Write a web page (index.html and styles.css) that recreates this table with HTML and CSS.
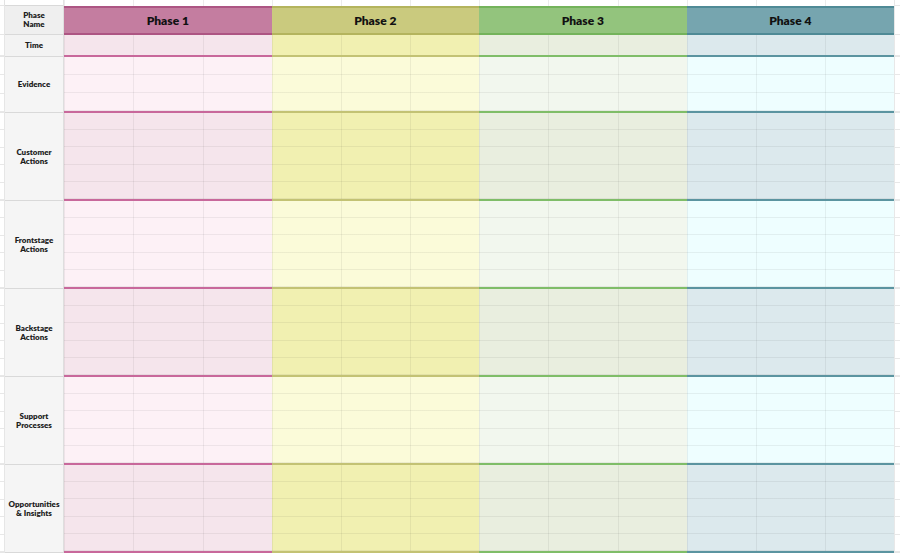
FILE: index.html
```html
<!DOCTYPE html>
<html lang="en">
<head>
<meta charset="utf-8">
<title>Customer Journey Map</title>
<link rel="stylesheet" href="styles.css">
</head>
<body>
<div class="sheet">
  <div class="row top">
    <div class="gut"></div><div class="lab"></div>
    <div class="blank"></div><div class="blank"></div><div class="blank"></div><div class="blank"></div>
    <div class="gut end"></div>
  </div>
  <div class="row head">
    <div class="gut"></div>
    <div class="lab">Phase<br>Name</div>
    <div class="ph p1">Phase 1</div>
    <div class="ph p2">Phase 2</div>
    <div class="ph p3">Phase 3</div>
    <div class="ph p4">Phase 4</div>
    <div class="gut end"></div>
  </div>
  <div class="row sec time dark" style="--n:1">
    <div class="gut"></div>
    <div class="lab">Time</div>
    <div class="cells p1"></div><div class="cells p2"></div><div class="cells p3"></div><div class="cells p4"></div>
    <div class="gut end"></div>
  </div>
  <div class="row sec ev light" style="--n:3">
    <div class="gut"></div>
    <div class="lab">Evidence</div>
    <div class="cells p1"></div><div class="cells p2"></div><div class="cells p3"></div><div class="cells p4"></div>
    <div class="gut end"></div>
  </div>
  <div class="row sec big dark" style="--n:5">
    <div class="gut"></div>
    <div class="lab">Customer<br>Actions</div>
    <div class="cells p1"></div><div class="cells p2"></div><div class="cells p3"></div><div class="cells p4"></div>
    <div class="gut end"></div>
  </div>
  <div class="row sec big light" style="--n:5">
    <div class="gut"></div>
    <div class="lab">Frontstage<br>Actions</div>
    <div class="cells p1"></div><div class="cells p2"></div><div class="cells p3"></div><div class="cells p4"></div>
    <div class="gut end"></div>
  </div>
  <div class="row sec big dark" style="--n:5">
    <div class="gut"></div>
    <div class="lab">Backstage<br>Actions</div>
    <div class="cells p1"></div><div class="cells p2"></div><div class="cells p3"></div><div class="cells p4"></div>
    <div class="gut end"></div>
  </div>
  <div class="row sec big light" style="--n:5">
    <div class="gut"></div>
    <div class="lab">Support<br>Processes</div>
    <div class="cells p1"></div><div class="cells p2"></div><div class="cells p3"></div><div class="cells p4"></div>
    <div class="gut end"></div>
  </div>
  <div class="row sec big dark" style="--n:5">
    <div class="gut"></div>
    <div class="lab">Opportunities<br>&amp; Insights</div>
    <div class="cells p1"></div><div class="cells p2"></div><div class="cells p3"></div><div class="cells p4"></div>
    <div class="gut end"></div>
  </div>
</div>
</body>
</html>
```

FILE: styles.css
```css
* { box-sizing: border-box; }

html, body {
  margin: 0;
  background: #ffffff;
}

body {
  font-family: Lato, "Open Sans", "Liberation Sans", sans-serif;
  color: #1c1c1c;
  width: 900px;
  height: 558px;
  overflow: hidden;
}

.sheet {
  display: flex;
  flex-direction: column;
}

.row {
  display: grid;
  grid-template-columns: 5px 59px repeat(4, 1fr) 6px;
}

.p1 { --hd: #c47da0; --hb: #ad5583; --dk: #f5e5ec; --lt: #fdf1f6; --ln: #c8689b; }
.p2 { --hd: #caca7e; --hb: #b4b45d; --dk: #f1f0b1; --lt: #fbfbd9; --ln: #c3c274; }
.p3 { --hd: #93c47d; --hb: #74b35b; --dk: #e9eedf; --lt: #f2f7ee; --ln: #7fbd68; }
.p4 { --hd: #76a5af; --hb: #4f8a96; --dk: #dce9ed; --lt: #eefeff; --ln: #5b94a0; }

/* top strip of the sheet */
.top { height: 6px; }
.top .gut { border-right: 1px solid #e3e3e3; }
.top .lab { border-right: 1px solid #e3e3e3; background: #ffffff; }
.blank {
  background-image: repeating-linear-gradient(to right, #ececec 0 1px, transparent 1px calc(100% / 3));
}

.gut {
  background: #ffffff;
  border-right: 1px solid #e6e6e6;
  border-bottom: 1px solid #e6e6e6;
}
.gut.end {
  border-right: 0;
  border-left: 1px solid #e8e8e8;
}

.sec .gut {
  background-image: repeating-linear-gradient(to bottom, transparent 0 calc(100% / var(--n) - 1px), #e8e8e8 calc(100% / var(--n) - 1px) calc(100% / var(--n)));
}

/* label column */
.lab {
  display: flex;
  align-items: center;
  justify-content: center;
  text-align: center;
  font-weight: 800;
  font-size: 8px;
  line-height: 9px;
  color: #1e1e1e;
  background: #f5f5f5;
  border-right: 1px solid #dedede;
  border-bottom: 1px solid #d9d9d9;
}

/* header */
.head { height: 29px; }
.head .lab { background: #efefef; }
.ph {
  display: flex;
  align-items: center;
  justify-content: center;
  font-size: 12px;
  font-weight: 800;
  color: #111111;
  background: var(--hd);
  border-top: 2px solid var(--hb);
  border-bottom: 2px solid var(--hb);
}

/* body sections */
.time { height: 22px; }
.time .lab { background: #f3f3f3; }
.ev { height: 56px; }
.big { height: 88px; }

.cells {
  --g: rgba(0, 0, 0, 0.06);
  border-bottom: 2px solid var(--ln);
  background-image:
    repeating-linear-gradient(to right, var(--g) 0 1px, transparent 1px calc(100% / 3)),
    repeating-linear-gradient(to bottom, transparent 0 calc(100% / var(--n) - 1px), var(--g) calc(100% / var(--n) - 1px) calc(100% / var(--n)));
}
.dark .cells { background-color: var(--dk); }
.light .cells { background-color: var(--lt); }
.time .cells { background-image: repeating-linear-gradient(to right, var(--g) 0 1px, transparent 1px calc(100% / 3)); }
```
